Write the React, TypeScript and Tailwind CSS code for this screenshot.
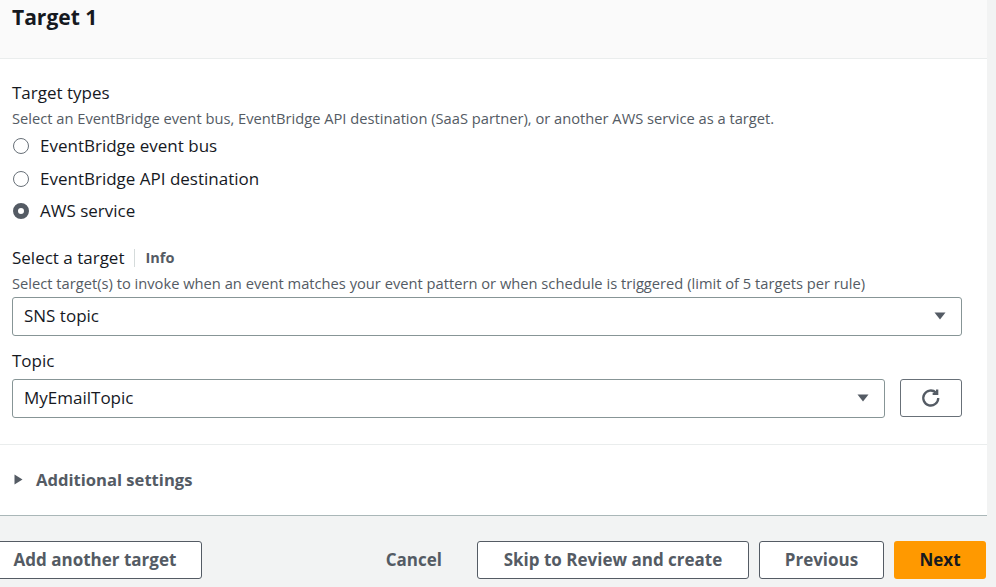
import React from "react";

const font = { fontFamily: '"Open Sans", "Noto Sans", Arial, sans-serif' };

function Radio({ checked, label }: { checked?: boolean; label: string }) {
  return (
    <div className="flex h-[32.5px] items-center">
      {checked ? (
        <span className="ml-[13px] box-border h-[16px] w-[16px] rounded-full border-[5px] border-[#545b64] bg-white" />
      ) : (
        <span className="ml-[13px] box-border h-[16px] w-[16px] rounded-full border-[1.5px] border-[#687078] bg-white" />
      )}
      <span className="ml-[11px] text-[17px] leading-[22px] text-[#16191f]">{label}</span>
    </div>
  );
}

function Caret() {
  return (
    <svg width="12" height="8" viewBox="0 0 12 8">
      <path d="M0.5 0.5 L11.5 0.5 L6 7.5 Z" fill="#545b64" />
    </svg>
  );
}

export default function App() {
  return (
    <div className="flex h-[587px] w-[996px] flex-col overflow-hidden bg-[#f2f3f3]" style={font}>
      <div className="mr-[9px] flex flex-col border-b border-[#aab7b8] bg-white">
        <div className="flex h-[59px] items-start border-b border-[#eaeded] bg-[#fafafa] px-[12px] pt-[3px]">
          <h2 className="text-[21px] font-bold leading-[28px] text-[#16191f]">Target 1</h2>
        </div>
        <div className="flex flex-col px-[12px] pt-[23px]">
          <div className="text-[17px] leading-[22px] text-[#16191f]">Target types</div>
          <div className="mt-[4px] text-[14.7px] leading-[20px] text-[#545b64]">
            Select an EventBridge event bus, EventBridge API destination (SaaS partner), or another AWS service as a target.
          </div>
          <div className="-ml-[12px] mt-[2px] flex flex-col">
            <Radio label="EventBridge event bus" />
            <Radio label="EventBridge API destination" />
            <Radio checked label="AWS service" />
          </div>
          <div className="mt-[19px] flex items-center">
            <span className="text-[17px] leading-[22px] text-[#16191f]">Select a target</span>
            <span className="ml-[10px] h-[18px] w-px bg-[#d5dbdb]" />
            <span className="ml-[10px] text-[14.5px] font-bold leading-[22px] text-[#545b64]">Info</span>
          </div>
          <div className="mt-[4px] text-[14.7px] leading-[20px] text-[#545b64]">
            Select target(s) to invoke when an event matches your event pattern or when schedule is triggered (limit of 5 targets per rule)
          </div>
          <div className="mt-[4px] flex h-[39px] w-[950px] items-center justify-between rounded-[3px] border border-[#879596] pl-[11px] pr-[15px]">
            <span className="text-[17px] leading-[22px] text-[#16191f]">SNS topic</span>
            <Caret />
          </div>
          <div className="mt-[14px] text-[17px] leading-[22px] text-[#16191f]">Topic</div>
          <div className="mt-[7px] flex items-center">
            <div className="flex h-[39px] w-[873px] items-center justify-between rounded-[3px] border border-[#879596] pl-[11px] pr-[15px]">
              <span className="text-[17px] leading-[22px] text-[#16191f]">MyEmailTopic</span>
              <Caret />
            </div>
            <div className="ml-[15px] flex h-[38px] w-[62px] items-center justify-center rounded-[3px] border border-[#687078] bg-white">
              <svg width="22" height="22" viewBox="0 0 20 20" fill="none">
                <path d="M16.6 10a6.8 6.8 0 1 1-2.1-4.9" stroke="#545b64" strokeWidth="2.1" />
                <path d="M15.6 2.2v4.1h-4.1" stroke="#545b64" strokeWidth="2.1" strokeLinejoin="miter" />
              </svg>
            </div>
          </div>
        </div>
        <div className="mt-[26px] border-t border-[#eaeded]" />
        <div className="flex h-[70px] items-center pl-[14px]">
          <svg width="9" height="11" viewBox="0 0 9 11">
            <path d="M0.5 0.5 L8.5 5.5 L0.5 10.5 Z" fill="#545b64" />
          </svg>
          <span className="ml-[13px] text-[16.6px] font-bold leading-[22px] text-[#545b64]">Additional settings</span>
        </div>
      </div>
      <div className="mt-[25px] flex items-center">
        <button className="-ml-[12px] flex h-[38px] w-[214px] items-center justify-center rounded-[3px] border border-[#545b64] bg-white text-[17px] font-bold text-[#545b64]">
          Add another target
        </button>
        <div className="flex-1" />
        <button className="mr-[35px] text-[17px] font-bold text-[#545b64]">Cancel</button>
        <button className="flex h-[38px] w-[272px] items-center justify-center rounded-[3px] border border-[#545b64] bg-white text-[17px] font-bold text-[#545b64]">
          Skip to Review and create
        </button>
        <button className="ml-[10px] flex h-[38px] w-[125px] items-center justify-center rounded-[3px] border border-[#545b64] bg-white text-[17px] font-bold text-[#545b64]">
          Previous
        </button>
        <button className="ml-[10px] mr-[10px] flex h-[38px] w-[92px] items-center justify-center rounded-[3px] bg-[#ff9900] text-[17px] font-bold text-[#16191f]">
          Next
        </button>
      </div>
    </div>
  );
}
